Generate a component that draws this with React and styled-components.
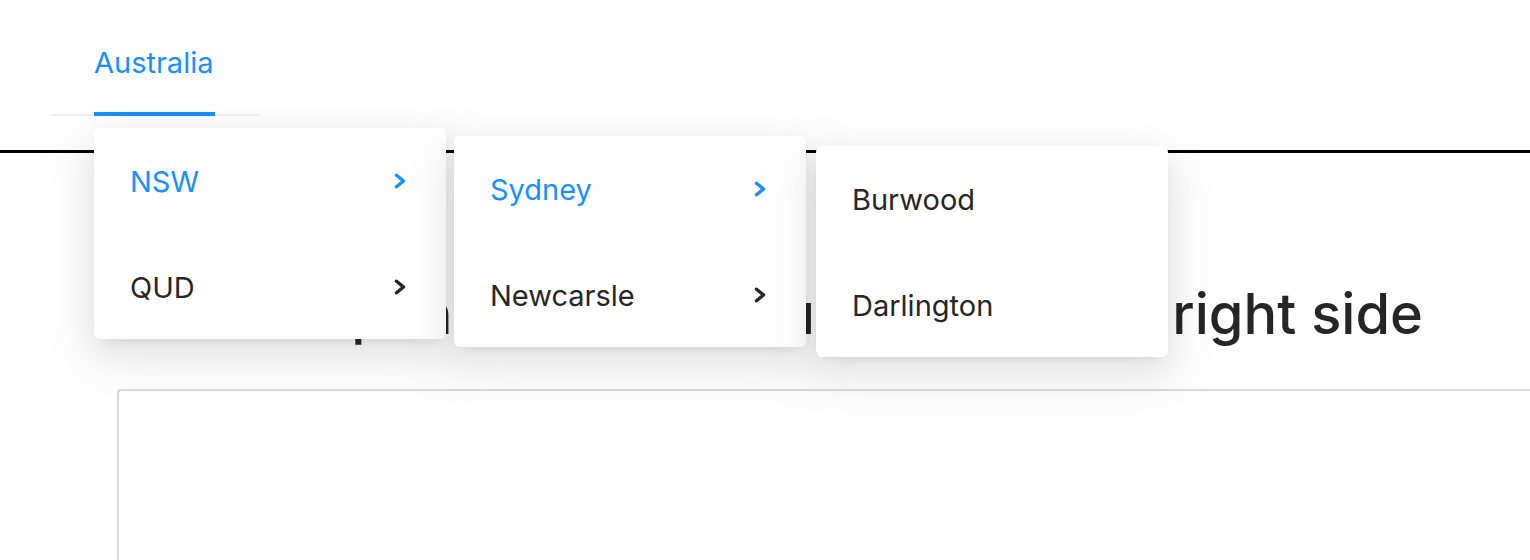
import React from 'react';
import styled, { createGlobalStyle } from 'styled-components';

const GlobalStyle = createGlobalStyle`
  body {
    margin: 0;
    background: #fff;
    font-family: Inter, "Noto Sans", "Liberation Sans", sans-serif;
    color: #262626;
    overflow: hidden;
  }
`;

const Page = styled.div`
  position: relative;
  width: 1530px;
  height: 560px;
  padding-top: 20px;
  box-sizing: border-box;
  overflow: hidden;
`;

const MenuBar = styled.nav`
  display: flex;
  width: 210px;
  height: 96px;
  margin-left: 50px;
  box-shadow: inset 0 -2px 0 #f0f0f0;
`;

const BarItem = styled.div`
  position: relative;
  height: 96px;
  box-sizing: border-box;
  padding: 0 44px;
  line-height: 86px;
  font-size: 29px;
  color: ${p => (p.$active ? '#1890ff' : '#262626')};

  &::after {
    content: '';
    position: absolute;
    left: 44px;
    right: 42px;
    bottom: 0;
    height: 4px;
    background: ${p => (p.$active ? '#1890ff' : 'transparent')};
  }
`;

const Rule = styled.hr`
  margin: 34px 0 0;
  border: 0;
  border-top: 3px solid #000;
`;

const Heading = styled.h1`
  margin: 128px 0 0;
  padding-right: 107px;
  text-align: right;
  font-size: 56px;
  line-height: 67px;
  font-weight: 500;
  white-space: nowrap;
  color: #262626;
`;

const Box = styled.div`
  margin: 41px 0 0 117px;
  width: 1500px;
  height: 300px;
  border: 2px solid #d9d9d9;
  border-radius: 4px;
`;

const Popup = styled.ul`
  position: absolute;
  left: ${p => p.$left}px;
  top: ${p => p.$top}px;
  width: 352px;
  margin: 0;
  padding: 9px 0 8px;
  list-style: none;
  display: flex;
  flex-direction: column;
  gap: 18px;
  background: #fff;
  border-radius: 6px;
  box-shadow:
    0 6px 12px -8px rgba(0, 0, 0, 0.12),
    0 12px 32px 0 rgba(0, 0, 0, 0.08),
    0 18px 56px 16px rgba(0, 0, 0, 0.05);
`;

const PopupItem = styled.li`
  display: flex;
  align-items: center;
  justify-content: space-between;
  height: 88px;
  padding: 0 40px 0 36px;
  font-size: 29px;
  color: ${p => (p.$active ? '#1890ff' : '#262626')};
`;

const Chevron = () => (
  <svg width="12" height="16" viewBox="0 0 12 16" fill="none">
    <polyline
      points="2.5,2.2 9.5,8 2.5,13.8"
      stroke="currentColor"
      strokeWidth="3.4"
      strokeLinecap="round"
      strokeLinejoin="round"
    />
  </svg>
);

const menus = [
  {
    left: 94,
    top: 128,
    items: [
      { label: 'NSW', active: true, sub: true },
      { label: 'QUD', sub: true },
    ],
  },
  {
    left: 454,
    top: 136,
    items: [
      { label: 'Sydney', active: true, sub: true },
      { label: 'Newcarsle', sub: true },
    ],
  },
  {
    left: 816,
    top: 146,
    items: [{ label: 'Burwood' }, { label: 'Darlington' }],
  },
];

export default function App() {
  return (
    <>
      <GlobalStyle />
      <Page>
        <MenuBar>
          <BarItem $active>Australia</BarItem>
        </MenuBar>
        <Rule />
        <Heading>Open nested menus only on the right side</Heading>
        <Box />
        {menus.map((m, i) => (
          <Popup key={i} $left={m.left} $top={m.top}>
            {m.items.map(it => (
              <PopupItem key={it.label} $active={it.active}>
                <span>{it.label}</span>
                {it.sub && <Chevron />}
              </PopupItem>
            ))}
          </Popup>
        ))}
      </Page>
    </>
  );
}
